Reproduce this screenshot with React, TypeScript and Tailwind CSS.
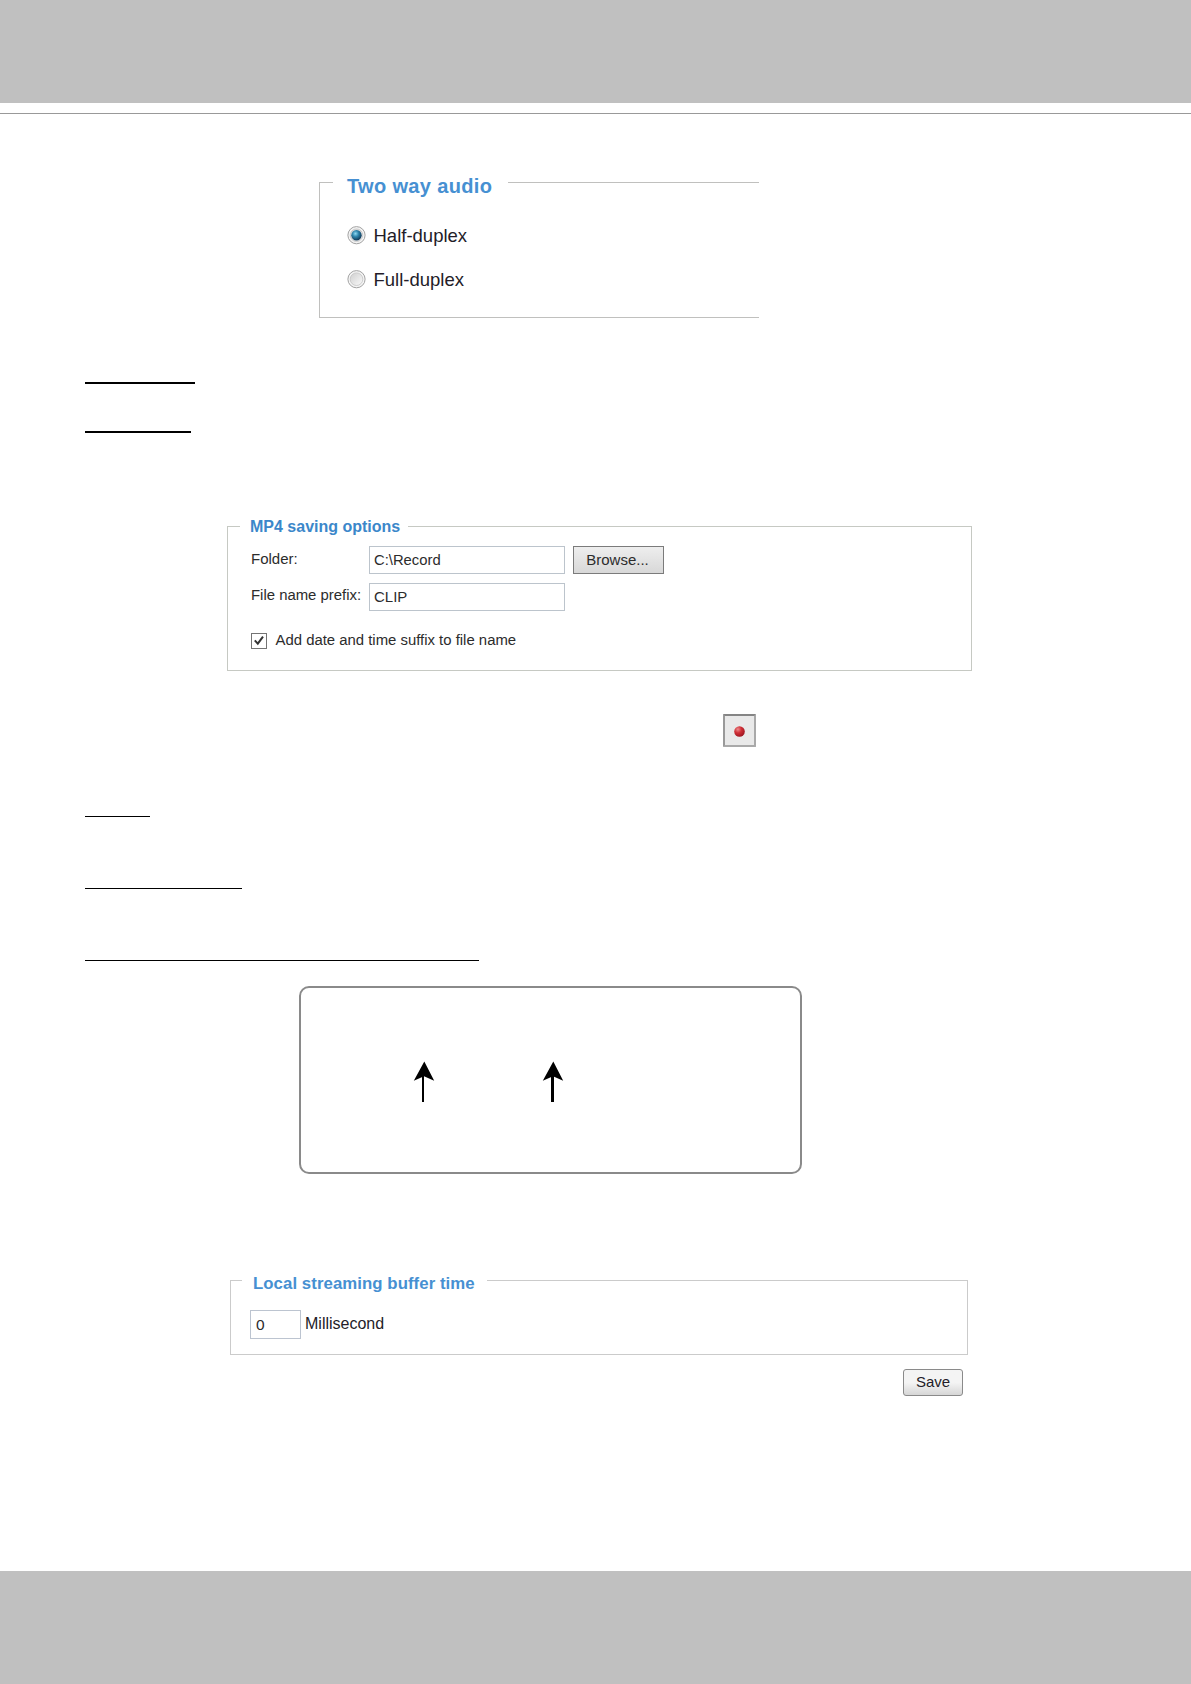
import React from "react";
import { useState } from "react";

function Radio({ checked }: { checked: boolean }) {
  return (
    <svg width="19" height="19" viewBox="0 0 19 19">
      <defs>
        <linearGradient id="ring" x1="0" y1="0" x2="1" y2="1">
          <stop offset="0" stopColor="#cfcfcf" />
          <stop offset="1" stopColor="#fafafa" />
        </linearGradient>
        <radialGradient id="dot" cx="0.4" cy="0.35" r="0.65">
          <stop offset="0" stopColor="#8fd8f2" />
          <stop offset="0.45" stopColor="#2f86ad" />
          <stop offset="1" stopColor="#123a58" />
        </radialGradient>
      </defs>
      <circle cx="9.5" cy="9.2" r="8.6" fill="#f4f4f4" stroke="#a2a2a2" />
      <circle cx="9.5" cy="9.2" r="6.3" fill="url(#ring)" stroke="#c4c4c4" strokeWidth="0.8" />
      {checked && <circle cx="9.5" cy="9.2" r="5.2" fill="url(#dot)" />}
    </svg>
  );
}

function Arrow({ stem }: { stem: number }) {
  return (
    <svg width="22" height="41" viewBox="0 0 22 41">
      <path d="M11.3 0.5 L21.2 19.8 L11 15.3 L0.8 19.8 Z" fill="#000" />
      <rect x="9" y="14" width={stem} height="27" fill="#000" />
    </svg>
  );
}

export default function App() {
  const [duplex, setDuplex] = useState("half");
  const [folder, setFolder] = useState("C:\\Record");
  const [prefix, setPrefix] = useState("CLIP");
  const [suffix, setSuffix] = useState(true);
  const [buffer, setBuffer] = useState("0");

  return (
    <div className="flex h-[1684px] w-[1191px] flex-col bg-white font-['Liberation_Sans',Arial,sans-serif] text-[#2c2c2c]">
      <header className="h-[103px] shrink-0 bg-[#c0c0c0]" />
      <div className="mt-[10px] h-px shrink-0 bg-[#999999]" />

      <main className="flex flex-col items-start">
        <fieldset className="ml-[319px] mt-[55px] h-[149px] w-[440px] border border-r-0 border-[#c0c0be] pl-[13px]">
          <legend className="h-[27px] w-[175px] whitespace-nowrap pl-[14px] text-[20px] font-bold leading-[34px] tracking-[0.35px] text-[#4690d2]">
            Two way audio
          </legend>
          <div className="flex flex-col pl-[14px] pt-[17px] text-[18.5px] text-[#231c28]">
            <button onClick={() => setDuplex("half")} className="flex h-[44px] items-center gap-[7.5px]">
              <Radio checked={duplex === "half"} />
              <span className="pt-[2px]">Half-duplex</span>
            </button>
            <button onClick={() => setDuplex("full")} className="flex h-[44px] items-center gap-[7.5px]">
              <Radio checked={duplex === "full"} />
              <span className="pt-[2px]">Full-duplex</span>
            </button>
          </div>
        </fieldset>

        <div className="ml-[85px] mt-[64px] h-[2px] w-[110px] bg-black" />
        <div className="ml-[85px] mt-[47px] h-[2px] w-[106px] bg-black" />

        <fieldset className="ml-[227px] mt-[83px] h-[155px] w-[745px] border border-[#c6c9c3] pl-[12px]">
          <legend className="h-[21px] w-[168px] whitespace-nowrap pl-[10px] text-[16px] font-bold leading-[22px] text-[#3b87ca]">
            MP4 saving options
          </legend>
          <div className="flex flex-col pl-[11px] pt-[9px] text-[15px]">
            <div className="flex h-[28px]">
              <label className="w-[118px] text-[15px] leading-[26px]">Folder:</label>
              <input
                onChange={(e) => setFolder(e.target.value)}
                value={folder}
                className="h-[28px] w-[196px] border border-[#bcc4cc] pb-px pl-[4px] text-[14.8px]"
                type="text"
              />
              <button className="ml-[8px] h-[28px] w-[91px] border border-[#7b7b7b] bg-linear-to-b from-[#eeeeee] to-[#d8d8d8] pr-[2px] text-[15px]">
                Browse...
              </button>
            </div>
            <div className="mt-[9px] flex h-[28px]">
              <label className="w-[118px] whitespace-nowrap text-[14.9px] leading-[24px]">File name prefix:</label>
              <input
                onChange={(e) => setPrefix(e.target.value)}
                value={prefix}
                className="h-[28px] w-[196px] border border-[#bcc4cc] pb-px pl-[4px]"
                type="text"
              />
            </div>
            <button onClick={() => setSuffix(!suffix)} className="mt-[22px] flex h-[16px] gap-[8.5px]">
              <svg width="16" height="16" viewBox="0 0 16 16">
                <rect x="0.5" y="0.5" width="15" height="15" fill="#fff" stroke="#747474" />
                {suffix && <path d="M3.8 7.4 L6.8 10.6 L12 3.6" fill="none" stroke="#333" strokeWidth="2" />}
              </svg>
              <span className="whitespace-nowrap text-[14.9px] leading-[15px]">Add date and time suffix to file name</span>
            </button>
          </div>
        </fieldset>

        <button className="ml-[723px] mt-[43px] flex h-[33px] w-[33px] items-center justify-center rounded-[1px] border-2 border-b-[#a9a9a9] border-l-[#999999] border-r-[#a9a9a9] border-t-[#858585] bg-[#e9e9e9]">
          <svg width="11" height="11" viewBox="0 0 11 11" className="mt-[2px] mr-px">
            <defs>
              <radialGradient id="rec" cx="0.35" cy="0.3" r="0.75">
                <stop offset="0" stopColor="#ec8a8c" />
                <stop offset="0.45" stopColor="#cf2f36" />
                <stop offset="1" stopColor="#9c1420" />
              </radialGradient>
            </defs>
            <circle cx="5.5" cy="5.5" r="5.3" fill="url(#rec)" />
          </svg>
        </button>

        <div className="ml-[85px] mt-[69px] h-px w-[65px] bg-black" />
        <div className="ml-[85px] mt-[71px] h-px w-[157px] bg-black" />
        <div className="ml-[85px] mt-[71px] h-px w-[394px] bg-black" />

        <div className="ml-[299px] mt-[25px] flex h-[188px] w-[503px] gap-[107px] rounded-[10px] border-2 border-[#8a8a8a] pl-[112px] pt-[73px]">
          <Arrow stem={2} />
          <Arrow stem={3} />
        </div>

        <fieldset className="ml-[230px] mt-[96px] h-[85px] w-[738px] border border-[#cbcbcb] pl-[11px]">
          <legend className="h-[21px] w-[245px] whitespace-nowrap pl-[11px] text-[16.8px] font-bold leading-[28px] tracking-[0.06px] text-[#4690d2]">
            Local streaming buffer time
          </legend>
          <div className="flex pl-[8px] pt-[19px]">
            <input
              onChange={(e) => setBuffer(e.target.value)}
              value={buffer}
              className="h-[29px] w-[51px] border border-[#bcc4d0] pl-[5px] text-[15.5px]"
              type="text"
            />
            <span className="ml-[4px] text-[16px] leading-[27px] text-[#231c28]">Millisecond</span>
          </div>
        </fieldset>

        <button className="ml-[903px] mt-[14px] h-[27px] w-[60px] rounded-[3px] border border-[#8a8a8a] bg-linear-to-b from-[#f4f4f4] from-50% to-[#d6d6d6] text-[15px] text-[#231c28]">
          Save
        </button>
      </main>

      <footer className="mt-auto h-[113px] shrink-0 bg-[#c0c0c0]" />
    </div>
  );
}
